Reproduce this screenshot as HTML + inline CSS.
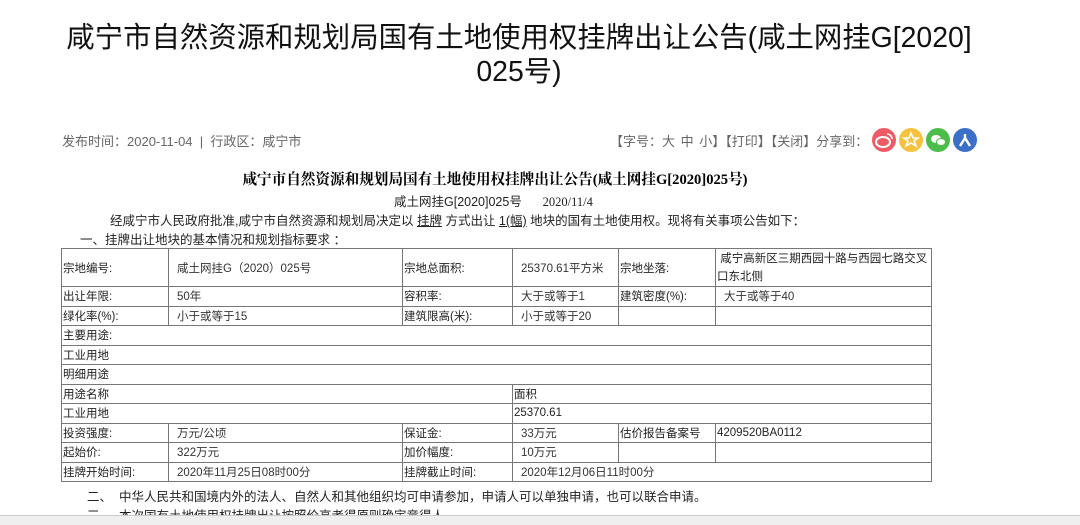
<!DOCTYPE html>
<html><head><meta charset="utf-8"><style>
*{margin:0;padding:0;box-sizing:border-box}
body{width:1080px;height:525px;overflow:hidden;background:#fff;font-family:"Liberation Sans","Noto Sans CJK SC",sans-serif;color:#000;position:relative}
.t{position:absolute;left:19px;width:1000px;top:21px;text-align:center;font-size:28.4px;line-height:34px;color:#111}
.meta{position:absolute;top:131px;left:62px;font-size:13px;color:#666}
.tools{position:absolute;top:131px;left:610px;font-size:13px;color:#666;word-spacing:2px}
.ic{position:absolute;top:128px;width:24px;height:24px;border-radius:50%}
.h{position:absolute;top:168px;left:-45px;width:1080px;text-align:center;font-size:14.6px;font-weight:bold;font-family:"Liberation Serif","Noto Serif CJK SC",serif}
.s{position:absolute;font-size:12.5px;color:#222}
table{position:absolute;left:61px;top:248px;width:871px;border-collapse:collapse;font-size:11.5px;color:#222}
td{border:1px solid #777;padding:0 0 0 1px;height:19.5px;vertical-align:middle;white-space:nowrap}
td.v{padding-left:8px;color:#333}
.bar{position:absolute;left:0;top:515px;width:1080px;height:10px;background:#efefef;border-top:1px solid #ccc}
</style></head><body>
<div class="t">咸宁市自然资源和规划局国有土地使用权挂牌出让公告(咸土网挂G[2020]<br>025号)</div>
<div class="meta">发布时间：2020-11-04 &nbsp;| &nbsp;行政区：咸宁市</div>
<div class="tools">【字号：大 中 小】【打印】【关闭】分享到：</div>
<div class="ic" style="left:872px;background:#ee5b63"><svg width="24" height="24"><ellipse cx="11" cy="14" rx="7" ry="5" fill="none" stroke="#fff" stroke-width="2"/><path d="M15 6a5 5 0 0 1 5 5" stroke="#fff" stroke-width="1.6" fill="none"/></svg></div>
<div class="ic" style="left:899px;background:#f6c23d"><svg width="24" height="24"><path d="M12 5l2 5h5l-4 3 2 5-5-3-5 3 2-5-4-3h5z" fill="none" stroke="#fff" stroke-width="1.6"/></svg></div>
<div class="ic" style="left:926px;background:#4cbd4a"><svg width="24" height="24"><ellipse cx="10" cy="11" rx="5" ry="4" fill="#fff"/><ellipse cx="15" cy="14" rx="4.5" ry="3.5" fill="#fff" stroke="#4cbd4a"/></svg></div>
<div class="ic" style="left:953px;background:#3c6fc8"><svg width="24" height="24"><path d="M12 6v4M12 10l-5 8M12 10l5 8" stroke="#fff" stroke-width="2.4" fill="none"/></svg></div>
<div class="h">咸宁市自然资源和规划局国有土地使用权挂牌出让公告(咸土网挂G[2020]025号)</div>
<div class="s" style="top:191px;left:394px">咸土网挂G[2020]025号 &nbsp; &nbsp; &nbsp;<span style="font-family:'Liberation Serif',serif">2020/11/4</span></div>
<div class="s" style="top:210px;left:110px">经咸宁市人民政府批准,咸宁市自然资源和规划局决定以 <u>挂牌</u> 方式出让 <u>1(幅)</u> 地块的国有土地使用权。现将有关事项公告如下：</div>
<div class="s" style="top:229px;left:80px">一、挂牌出让地块的基本情况和规划指标要求 ：</div>
<table>
<colgroup><col style="width:107px"><col style="width:234px"><col style="width:110px"><col style="width:106px"><col style="width:97px"><col></colgroup>
<tr style="height:38px"><td>宗地编号:</td><td class="v">咸土网挂G（2020）025号</td><td>宗地总面积:</td><td class="v">25370.61平方米</td><td>宗地坐落:</td><td style="white-space:normal;line-height:18px"> &nbsp;咸宁高新区三期西园十路与西园七路交叉口东北侧</td></tr>
<tr><td>出让年限:</td><td class="v">50年</td><td>容积率:</td><td class="v">大于或等于1</td><td>建筑密度(%):</td><td class="v">大于或等于40</td></tr>
<tr><td>绿化率(%):</td><td class="v">小于或等于15</td><td>建筑限高(米):</td><td class="v">小于或等于20</td><td></td><td></td></tr>
<tr><td colspan="6">主要用途:</td></tr>
<tr><td colspan="6">工业用地</td></tr>
<tr><td colspan="6">明细用途</td></tr>
<tr><td colspan="3">用途名称</td><td colspan="3">面积</td></tr>
<tr><td colspan="3">工业用地</td><td colspan="3">25370.61</td></tr>
<tr><td>投资强度:</td><td class="v">万元/公顷</td><td>保证金:</td><td class="v">33万元</td><td>估价报告备案号</td><td>4209520BA0112</td></tr>
<tr><td>起始价:</td><td class="v">322万元</td><td>加价幅度:</td><td class="v">10万元</td><td></td><td></td></tr>
<tr><td>挂牌开始时间:</td><td class="v">2020年11月25日08时00分</td><td>挂牌截止时间:</td><td class="v" colspan="3">2020年12月06日11时00分</td></tr>
</table>
<div class="s" style="top:486px;left:87px">二、 &nbsp;中华人民共和国境内外的法人、自然人和其他组织均可申请参加，申请人可以单独申请，也可以联合申请。</div>
<div class="s" style="top:505px;left:87px">三、 &nbsp;本次国有土地使用权挂牌出让按照价高者得原则确定竞得人。</div>
<div class="bar"></div>
</body></html>
